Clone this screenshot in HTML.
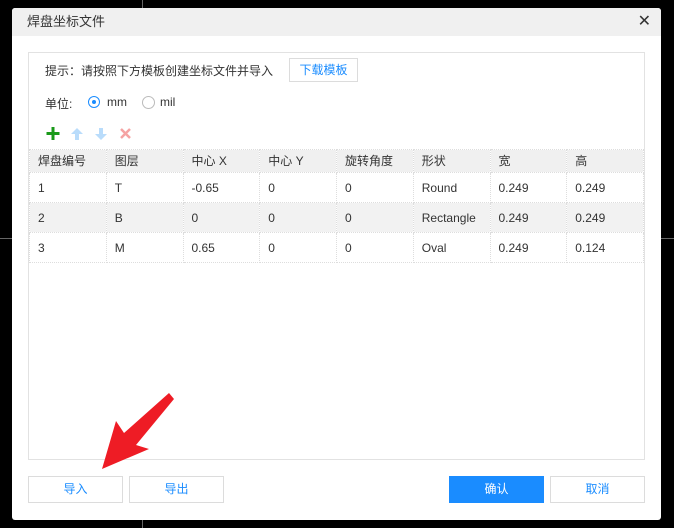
<!DOCTYPE html><html><head><meta charset="utf-8"><style>
body{margin:0;width:674px;height:528px;background:#000;position:relative;overflow:hidden;font-family:"Liberation Sans","Noto Sans CJK SC",sans-serif;font-size:12px;color:#333}
.a{position:absolute}
.dlg{left:12px;top:8px;width:649px;height:512px;background:#fff;border-radius:3px;overflow:hidden}
.hd{left:0;top:0;width:649px;height:28px;background:#f0f0f0;font-size:13px;line-height:28px;padding-left:15px;box-sizing:border-box}
.box{left:16px;top:44px;width:617px;height:408px;border:1px solid #e2e2e2;box-sizing:border-box}
table{position:absolute;left:0;top:96px;width:615px;border-collapse:collapse;table-layout:fixed}
td{border:1px dotted #ddd;height:30px;line-height:28px;padding:0 0 0 8px;box-sizing:border-box;white-space:nowrap;overflow:hidden}
tr.h td{height:23px;line-height:21px;background:#f0f0f0}
tr.g td{background:#f2f2f2}
.btn{top:468px;width:95px;height:27px;border:1px solid #dcdcdc;box-sizing:border-box;text-align:center;line-height:25px;color:#1a8cff;background:#fff}
</style></head><body>
<div class="a" style="left:142px;top:0;width:1px;height:8px;background:#666"></div>
<div class="a" style="left:142px;top:520px;width:1px;height:8px;background:#666"></div>
<div class="a" style="left:0;top:238px;width:12px;height:1px;background:#666"></div>
<div class="a" style="left:661px;top:238px;width:13px;height:1px;background:#666"></div>
<div class="a dlg">
<div class="a hd">焊盘坐标文件<span style="position:absolute;right:10px;top:0;font-size:16px">✕</span></div>
<div class="a box">
<div class="a" style="left:16px;top:10px;line-height:16px">提示：请按照下方模板创建坐标文件并导入</div>
<div class="a" style="left:260px;top:5px;width:69px;height:24px;border:1px solid #dcdcdc;box-sizing:border-box;color:#1a8cff;text-align:center;line-height:22px">下载模板</div>
<div class="a" style="left:16px;top:42px">单位:</div>
<div class="a" style="left:59px;top:43px;width:12px;height:12px;border:1px solid #1a8cff;border-radius:50%;box-sizing:border-box"><div class="a" style="left:3px;top:3px;width:4px;height:4px;background:#1a8cff;border-radius:50%"></div></div>
<div class="a" style="left:78px;top:42px">mm</div>
<div class="a" style="left:113px;top:43px;width:13px;height:13px;border:1px solid #bbb;border-radius:50%;box-sizing:border-box"></div>
<div class="a" style="left:131px;top:42px">mil</div>
<svg class="a" style="left:16px;top:73px" width="110" height="16">
<path d="M8 1v13M1.5 7.5h13" stroke="#1a9a1a" stroke-width="3"/>
<path d="M32 2l-6 6h4v6h4v-6h4z" fill="#b9dcfb"/>
<path d="M56 14l-6-6h4v-6h4v6h4z" fill="#b9dcfb"/>
<path d="M76 3l9 9M85 3l-9 9" stroke="#f5a3a3" stroke-width="2.5"/>
</svg>
<table>
<tr class="h"><td>焊盘编号</td><td>图层</td><td>中心 X</td><td>中心 Y</td><td>旋转角度</td><td>形状</td><td>宽</td><td>高</td></tr>
<tr><td>1</td><td>T</td><td>-0.65</td><td>0</td><td>0</td><td>Round</td><td>0.249</td><td>0.249</td></tr>
<tr class="g"><td>2</td><td>B</td><td>0</td><td>0</td><td>0</td><td>Rectangle</td><td>0.249</td><td>0.249</td></tr>
<tr><td>3</td><td>M</td><td>0.65</td><td>0</td><td>0</td><td>Oval</td><td>0.249</td><td>0.124</td></tr>
</table>
</div>
<div class="a btn" style="left:16px">导入</div>
<div class="a btn" style="left:117px">导出</div>
<div class="a btn" style="left:437px;background:#1a8cff;border-color:#1a8cff;color:#fff">确认</div>
<div class="a btn" style="left:538px">取消</div>
</div>
<svg class="a" style="left:0;top:0" width="674" height="528"><polygon points="102,469 116,421 124,433 169,393 174,399 136,445 149,449" fill="#ee1c25"/></svg>
</body></html>
